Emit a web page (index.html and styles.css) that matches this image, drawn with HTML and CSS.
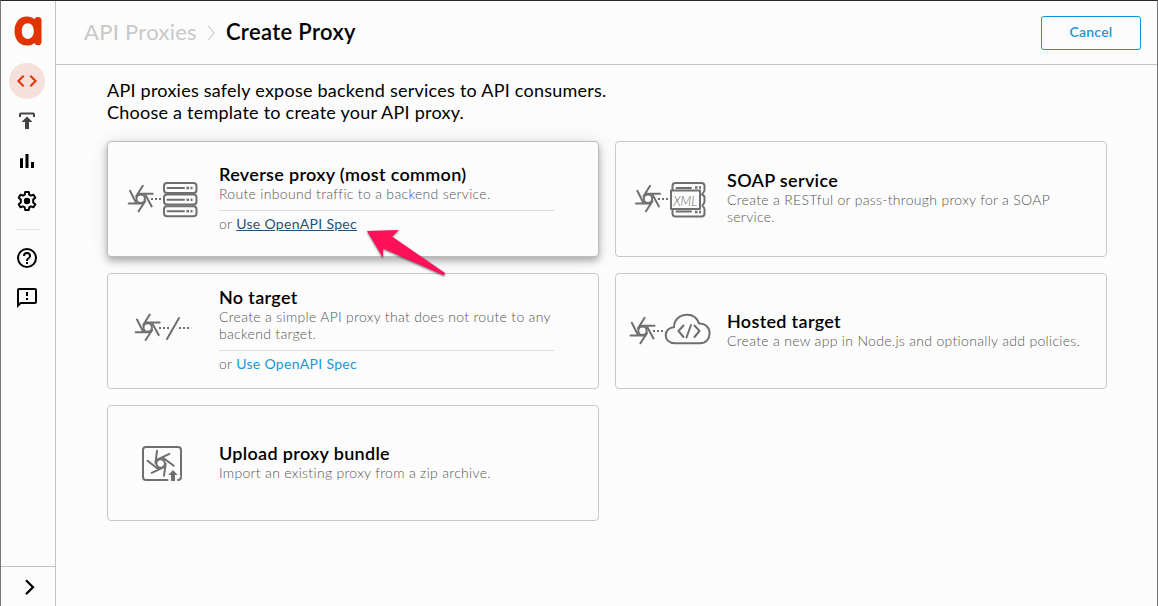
FILE: index.html
```html
<!DOCTYPE html>
<html lang="en">
<head>
<meta charset="utf-8">
<title>Create Proxy</title>
<link rel="stylesheet" href="styles.css">
</head>
<body>
<svg class="defs" width="0" height="0" aria-hidden="true">
  <defs>
    <g id="sprocket" fill="none" stroke="#6f6f6f" stroke-width="2" stroke-linecap="round">
      <circle r="4.2"/>
      <path d="M2.1-13-4.5-2.5M12-5H-2M11 7.6 4.6-4M-2.1 12.5 4.5 2.5M-12 4.7H2M-10.7-8-4.6 4"/>
    </g>
  </defs>
</svg>
<div class="app">
  <nav class="sidebar">
    <svg class="logo" width="28" height="30" viewBox="0 0 28 30"><path fill="#e13400" fill-rule="evenodd" d="M20.500 3.200C21 1.500 22.200 1 24 1c2.400 0 3.500 1 3.500 3v22c0 2-1.100 3.200-3.500 3.200-1.800 0-3-.6-3.500-2.200-2 1.700-4.500 2.600-7.500 2.600C5.500 29.600.5 23.300.5 15S5.500.6 13 .6c3 0 5.500.9 7.500 2.600zM13.800 7.200c-3.700 0-6 3.200-6 7.800s2.300 7.900 6 7.900 6-3.300 6-7.900-2.300-7.800-6-7.800z"/></svg>
    <a class="nav-item active"><svg width="24" height="24" viewBox="0 0 24 24"><path fill="none" stroke="#e13400" stroke-width="2" d="M8.700 6.700 3.400 12l5.300 5.300M15.300 6.700l5.300 5.300-5.300 5.300"/></svg></a>
    <a class="nav-item"><svg width="24" height="24" viewBox="0 0 24 24"><path fill="none" stroke="#444" stroke-width="2" d="M5 8V5.500Q5 4.500 6 4.500H18Q19 4.500 19 5.500V8"/><path fill="#444" d="M12 7.500l5.500 5.500H14v7h-4v-7H6.500z"/></svg></a>
    <a class="nav-item"><svg width="24" height="24" viewBox="0 0 24 24"><path d="M5 9.200h3V19H5zM10.500 5h3v14h-3zM16 13h3v6h-3z"/></svg></a>
    <a class="nav-item"><svg width="24" height="24" viewBox="0 0 24 24"><path fill="none" stroke="#000" stroke-width="2" stroke-linejoin="round" d="M10.200 3h3.600l.5 2.700 1.600.9 2.600-.9 1.800 3.100-2.100 1.800v2.800l2.100 1.800-1.800 3.100-2.600-.9-1.600.9-.5 2.700h-3.600l-.5-2.700-1.600-.9-2.600.9-1.800-3.100 2.100-1.800v-2.800L3.700 8.800l1.800-3.100 2.600.9 1.600-.9z"/><circle cx="12" cy="12" r="3.200"/></svg></a>
    <div class="nav-divider"></div>
    <a class="nav-item"><svg width="24" height="24" viewBox="0 0 24 24"><circle cx="12" cy="12" r="9" fill="none" stroke="#000" stroke-width="2"/><path d="M11 16h2v2h-2zM12 6a4 4 0 0 0-4 4h2a2 2 0 1 1 4 0c0 2-3 1.750-3 5h2c0-2.250 3-2.500 3-5a4 4 0 0 0-4-4z"/></svg></a>
    <a class="nav-item"><svg width="24" height="24" viewBox="0 0 24 24"><path d="M20 2H4a2 2 0 0 0-2 2v18l4-4h14a2 2 0 0 0 2-2V4a2 2 0 0 0-2-2zm0 14H5.200L4 17.200V4h16zM11 12h2v2h-2zM11 6h2v4h-2z"/></svg></a>
    <a class="expand"><svg width="24" height="24" viewBox="0 0 24 24"><path fill="none" stroke="#000" stroke-width="2.200" d="M9 5.300 16 12.200 9 19.100"/></svg></a>
  </nav>
  <main class="main">
    <header class="header">
      <span class="crumb">API Proxies</span>
      <svg class="sep" width="8" height="16" viewBox="0 0 8 16"><path fill="none" stroke="#bdbdbd" d="M1 .5 7 8 1 15.500"/></svg>
      <h1 class="title">Create Proxy</h1>
      <button class="cancel">Cancel</button>
    </header>
    <section class="content">
      <p class="intro">API proxies safely expose backend services to API consumers.<br>Choose a template to create your API proxy.</p>
      <div class="grid">
        <article class="card raised">
          <svg class="art" width="110" height="60" viewBox="0 0 110 60">
            <use href="#sprocket" x="32.700" y="29.800"/>
            <path class="dots" d="M43 30h10"/>
            <g class="line"><rect x="56" y="14" width="32.500" height="10" rx="3"/><rect x="56" y="25.500" width="32.500" height="10" rx="3"/><rect x="56" y="37.300" width="32.500" height="10" rx="3"/><path d="M59.500 19h16.500M59.500 30.700h16.500M59.500 42.300h16.500"/></g>
            <path class="dots wide" d="M78.500 19h6M78.500 30.700h6M78.500 42.300h6"/>
          </svg>
          <div class="text">
            <h2>Reverse proxy (most common)</h2>
            <p class="desc">Route inbound traffic to a backend service.</p>
            <p class="alt">or <a class="link hover">Use OpenAPI Spec</a></p>
          </div>
          <svg class="pointer" width="86" height="54" viewBox="0 0 86 54"><path fill="#ff1059" d="M4 4 36 3 29 9.500 82 46 81 48.500 20 21.500V31z"/></svg>
        </article>
        <article class="card">
          <svg class="art" width="110" height="60" viewBox="0 0 110 60">
            <use href="#sprocket" x="32" y="29.800"/>
            <path class="dots" d="M42 30h10"/>
            <g class="line"><path d="M56.500 21v-4q0-3 3-3h26q3 0 3 3v4q0 2-2 3.500M86 25.500q2.500 1 2.500 3v4q0 2-2 3.500M86.500 37q2 1.500 2 3.500v4q0 3-3 3h-26q-3 0-3-3V40.500M60.500 19h14.500M60.500 42.500h14.500"/><rect x="55" y="21.500" width="29" height="18.500" fill="#fcfcfc"/></g>
            <path class="dots wide" d="M79 18.500h6M79 43h6"/>
            <text x="57.200" y="36.500" class="xml" textLength="24" lengthAdjust="spacingAndGlyphs">XML</text>
          </svg>
          <div class="text">
            <h2>SOAP service</h2>
            <p class="desc">Create a RESTful or pass-through proxy for a SOAP service.</p>
          </div>
        </article>
        <article class="card tall">
          <svg class="art" width="110" height="60" viewBox="0 0 110 60">
            <use href="#sprocket" x="39.700" y="26.500"/>
            <path class="dots" d="M51 27h10M71 27h10"/>
            <path class="line" d="M71 17 59 38"/>
          </svg>
          <div class="text">
            <h2>No target</h2>
            <p class="desc">Create a simple API proxy that does not route to any backend target.</p>
            <p class="alt">or <a class="link">Use OpenAPI Spec</a></p>
          </div>
        </article>
        <article class="card">
          <svg class="art" width="110" height="60" viewBox="0 0 110 60">
            <use href="#sprocket" x="26.500" y="29.800"/>
            <path class="dots" d="M37 30h10"/>
            <path class="line" d="M59 42.300C53 42.300 49.700 38.500 49.700 34.300 49.700 29.500 53.500 26.500 58 26.300 58 18.500 64 13.700 71 13.700 77.500 13.700 81.500 17.500 83 22.500 89 22 93.600 26.500 93.600 32.300 93.600 38 90 42.300 84 42.300ZM67.500 24.500 62.500 30l5 6M78.500 24.500 83.500 30l-5 6M75 24 70.500 36.500"/>
          </svg>
          <div class="text">
            <h2>Hosted target</h2>
            <p class="desc">Create a new app in Node.js and optionally add policies.</p>
          </div>
        </article>
        <article class="card">
          <svg class="art" width="110" height="60" viewBox="0 0 110 60">
            <path class="line" d="M59.500 47H38q-3 0-3-3V17q0-3 3-3h32q3 0 3 3v27q0 3-3 3"/>
            <use href="#sprocket" transform="translate(52.600 30.500) rotate(-25)"/>
            <path d="M65 37l4.700 5H67v6h-4v-6h-2.700z" fill="#6f6f6f" stroke="#fcfcfc" stroke-width="3" paint-order="stroke"/>
          </svg>
          <div class="text">
            <h2>Upload proxy bundle</h2>
            <p class="desc">Import an existing proxy from a zip archive.</p>
          </div>
        </article>
      </div>
    </section>
  </main>
</div>
</body>
</html>
```
FILE: styles.css
```css
* { box-sizing: border-box; }
body { margin: 0; font-family: Lato, sans-serif; color: #000; background: #fcfcfc; }
h1, h2, p { margin: 0; }
.defs { position: absolute; }
.app { display: flex; width: 1158px; height: 606px; overflow: hidden; border-top: 1px solid #29272b; border-left: 1px solid #77777b; border-right: 1px solid #77777b; }
.sidebar { display: flex; flex-direction: column; align-items: center; flex: none; width: 55px; padding: 15px 2px 0 0; border-right: 1px solid #c4c4c4; }
.logo { display: block; margin: 0 0 17px 2px; flex: none; }
.nav-item { display: flex; align-items: center; justify-content: center; width: 36px; height: 36px; margin-bottom: 4px; border-radius: 50%; flex: none; }
.active { background: #f5e0dc; }
.nav-divider { width: 26px; height: 1px; margin: 6px 0 10px 1px; background: #e4e4e4; flex: none; }
.expand { display: flex; align-items: center; justify-content: center; align-self: stretch; height: 40px; margin: auto -2px 0 0; padding-left: 1px; border-top: 1px solid #c4c4c4; }
.main { flex: 1; }
.header { display: flex; align-items: center; height: 64px; padding: 0 16px 0 28px; border-bottom: 1px solid #c4c4c4; }
.crumb { font-size: 22px; color: #c8c8c8; letter-spacing: .28px; padding-bottom: 2px; }
.sep { margin: 0 11px 0 10px; }
.title { font-size: 22px; font-weight: 600; letter-spacing: .35px; padding-bottom: 2px; }
.cancel { width: 100px; height: 34px; margin-left: auto; padding: 0 0 2px; border: 1px solid #0e97d8; border-radius: 3px; background: #fcfcfc; color: #1a96d4; font: 600 14px Lato, sans-serif; letter-spacing: .2px; }
.content { padding: 14px 50px 0 51px; }
.intro { font-size: 18px; line-height: 22px; letter-spacing: .24px; margin-bottom: 18px; }
.grid { display: grid; grid-template-columns: 492px 492px; grid-auto-rows: 116px; gap: 16px; }
.card { position: relative; display: flex; align-items: center; border: 1px solid #c8c8c8; border-radius: 4px; background: #fcfcfc; }
.raised { border-color: #bdbdbd; box-shadow: 0 4px 7px rgba(0,0,0,.28), 0 1px 18px rgba(0,0,0,.1); }
.art { flex: none; margin-right: 1px; }
.text { width: 355px; padding-bottom: 4px; }
.raised .text { padding-bottom: 3px; }
.tall .text { padding-bottom: 5px; }
h2 { font-size: 18px; font-weight: 600; line-height: 22px; letter-spacing: .32px; }
.desc, .alt { font-size: 14px; font-weight: 300; line-height: 17px; letter-spacing: .31px; color: #555; }
.alt { width: 335px; margin-top: 8px; padding-top: 4px; border-top: 1px solid #dcdcdc; }
.link { font-weight: 400; color: #1a96d4; }
.hover { color: #23527c; text-decoration: underline; }
.line { fill: none; stroke: #6f6f6f; stroke-width: 2; stroke-linecap: round; stroke-linejoin: round; }
.dots { fill: none; stroke: #6f6f6f; stroke-width: 2; stroke-dasharray: 2 2; }
.wide { stroke-width: 2.5; stroke-dasharray: 2.5 1.5; }
.xml { font: italic 300 13px Lato, sans-serif; fill: #666; }
.pointer { position: absolute; left: 255px; top: 85px; z-index: 2; filter: drop-shadow(0 1px 1px rgba(0,0,0,.55)); }
```
